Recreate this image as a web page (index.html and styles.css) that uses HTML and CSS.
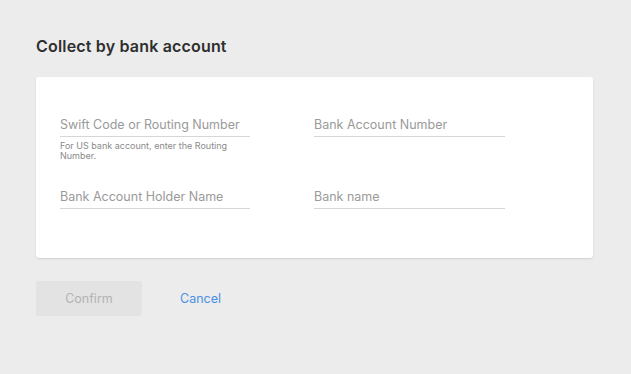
FILE: index.html
```html
<!doctype html>
<html lang="en">
  <head>
    <meta charset="UTF-8" />
    <meta name="viewport" content="width=device-width, initial-scale=1.0" />
    <title>Collect by bank account</title>
    <link rel="stylesheet" href="styles.css">
  </head>
  <body>
    <div class="page">
      <h1 class="title">Collect by bank account</h1>

      <form class="card">
        <div class="fields">
          <div class="field">
            <input class="input" type="text" placeholder="Swift Code or Routing Number" />
            <p class="hint">For US bank account, enter the Routing Number.</p>
          </div>
          <div class="field">
            <input class="input" type="text" placeholder="Bank Account Number" />
          </div>
          <div class="field">
            <input class="input" type="text" placeholder="Bank Account Holder Name" />
          </div>
          <div class="field">
            <input class="input" type="text" placeholder="Bank name" />
          </div>
        </div>
      </form>

      <div class="actions">
        <button class="confirm-button" type="button" disabled>Confirm</button>
        <a class="cancel-link" href="#">Cancel</a>
      </div>
    </div>
  </body>
</html>
```

FILE: styles.css
```css
* {
  margin: 0;
  padding: 0;
  box-sizing: border-box;
}

html,
body {
  height: 100%;
  font-family: Inter, 'Open Sans', sans-serif;
  background: #ececec;
  color: #333;
  overflow: hidden;
}

.page {
  padding: 35px 38px 0 36px;
}

.title {
  font-size: 16px;
  font-weight: 600;
  line-height: 22px;
  letter-spacing: 0.18px;
  color: #2f2f2f;
}

.card {
  margin-top: 20px;
  height: 181px;
  background: #fff;
  border-radius: 3px;
  box-shadow: 0 1px 2px rgba(0, 0, 0, 0.12);
  padding: 37px 24px 0;
}

.fields {
  display: grid;
  grid-template-columns: 190px 191px;
  column-gap: 64px;
}

.field {
  height: 72px;
}

.input {
  display: block;
  width: 100%;
  height: 23px;
  border: 0;
  border-bottom: 1px solid #d6d6d6;
  background: transparent;
  font-family: inherit;
  font-size: 12.5px;
  color: #333;
  padding: 0 0 1px;
  outline: none;
}

.input::placeholder {
  color: #9a9a9a;
}

.hint {
  margin-top: 4px;
  font-size: 9px;
  line-height: 10px;
  color: #8a8a8a;
}

.actions {
  display: flex;
  align-items: center;
  gap: 38px;
  margin-top: 23px;
}

.confirm-button {
  width: 106px;
  height: 35px;
  border: 0;
  border-radius: 3px;
  background: #e3e3e3;
  color: #b3b3b3;
  font-family: inherit;
  font-size: 12.5px;
}

.cancel-link {
  color: #4a8fe7;
  font-size: 12.5px;
  text-decoration: none;
}
```
